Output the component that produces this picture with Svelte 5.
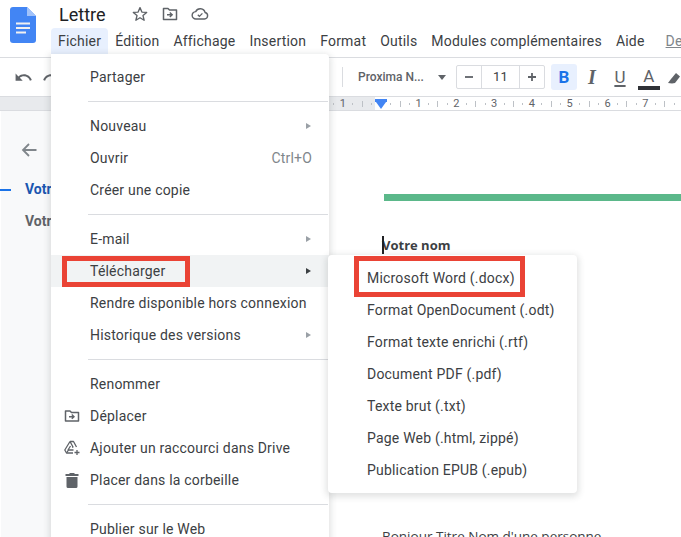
<script>
  const menus = ['Fichier', 'Édition', 'Affichage', 'Insertion', 'Format', 'Outils', 'Modules complémentaires', 'Aide']

  const fileMenu = [
    [{ label: 'Partager' }],
    [{ label: 'Nouveau', arrow: true }, { label: 'Ouvrir', shortcut: 'Ctrl+O' }, { label: 'Créer une copie' }],
    [
      { label: 'E-mail', arrow: true },
      { label: 'Télécharger', arrow: true, active: true },
      { label: 'Rendre disponible hors connexion' },
      { label: 'Historique des versions', arrow: true }
    ],
    [
      { label: 'Renommer' },
      { label: 'Déplacer', icon: 'move' },
      { label: 'Ajouter un raccourci dans Drive', icon: 'shortcut' },
      { label: 'Placer dans la corbeille', icon: 'trash' }
    ],
    [{ label: 'Publier sur le Web' }]
  ]

  const formats = [
    'Microsoft Word (.docx)',
    'Format OpenDocument (.odt)',
    'Format texte enrichi (.rtf)',
    'Document PDF (.pdf)',
    'Texte brut (.txt)',
    'Page Web (.html, zippé)',
    'Publication EPUB (.epub)'
  ]

  // the cell at 0 sits under the indent marker, so it stays blank
  const rulerMarks = ['1', '', '1', '2', '3', '4', '5', '6', '7', '']
  const undoPath = 'M12.500 8c-2.650 0-5.050.99-6.900 2.600L2 7v9h9l-3.620-3.620c1.390-1.160 3.160-1.880 5.120-1.880 3.540 0 6.550 2.310 7.600 5.500l2.370-.78C21.080 11.030 17.150 8 12.500 8z'
</script>

<div class="app">
  <header class="header">
    <svg class="logo" viewBox="0 0 26 36" width="26" height="36">
      <path d="M3 0h14l9 9v24a3 3 0 0 1-3 3H3a3 3 0 0 1-3-3V3a3 3 0 0 1 3-3z" fill="#4285f4" />
      <path d="M17 0l9 9h-9z" fill="#a1c2fa" />
      <path d="M6 15.500h14v2H6zM6 20h14v2H6zM6 24.500h10v2H6z" fill="#f1f1f1" />
    </svg>
    <div class="head-main">
      <div class="title-row">
        <span class="title">Lettre</span>
        <svg class="star" viewBox="0 0 24 24" width="18" height="18">
          <path d="M12 3.500l2.500 5.900 6.400.5-4.900 4.200 1.500 6.200L12 17l-5.500 3.300L8 14.100 3.100 9.900l6.400-.5z" fill="none" stroke="#5f6368" stroke-width="1.800" stroke-linejoin="round" />
        </svg>
        <svg class="folder" viewBox="0 0 18 18" width="18" height="18">
          <path d="M2.500 3.500h4.500l1.500 1.500h7v9.500h-13z" fill="none" stroke="#5f6368" stroke-width="1.500" stroke-linejoin="round" />
          <path d="M6 9.700h4.500M8.800 7.400l2.400 2.300-2.400 2.300" fill="none" stroke="#5f6368" stroke-width="1.400" />
        </svg>
        <svg class="cloud" viewBox="0 0 18 18" width="18" height="18">
          <path d="M5 14h8.500a3.300 3.300 0 0 0 .6-6.500A5 5 0 0 0 4.700 6.600 3.700 3.700 0 0 0 5 14z" fill="none" stroke="#5f6368" stroke-width="1.400" />
          <path d="M6.800 9.800l1.600 1.600 3-3" fill="none" stroke="#5f6368" stroke-width="1.300" />
        </svg>
      </div>
      <nav class="menubar">
        {#each menus as menu, i}
          <span class="menu-label" class:open={i === 0}>{menu}</span>
        {/each}
        <span class="last-edit">Dernière modification</span>
      </nav>
    </div>
  </header>

  <div class="toolbar">
    <svg class="undo" viewBox="0 0 24 24" width="19" height="19">
      <path d={undoPath} fill="#5f6368" />
    </svg>
    <svg class="redo" viewBox="0 0 24 24" width="19" height="19">
      <path d={undoPath} fill="#5f6368" transform="matrix(-1 0 0 1 24 0)" />
    </svg>
    <span class="tool-sep"></span>
    <span class="font-name">Proxima N...</span>
    <span class="caret"></span>
    <div class="size-box">
      <span class="size-btn">
        <svg viewBox="0 0 12 12" width="12" height="12"><path d="M2 6h8" stroke="#5f6368" stroke-width="1.800" /></svg>
      </span>
      <span class="size-value">11</span>
      <span class="size-btn">
        <svg viewBox="0 0 12 12" width="12" height="12"><path d="M2 6h8M6 2v8" stroke="#5f6368" stroke-width="1.800" /></svg>
      </span>
    </div>
    <span class="fmt bold-btn">B</span>
    <span class="fmt italic-btn">I</span>
    <span class="fmt underline-btn">U</span>
    <span class="fmt color-btn">A</span>
    <svg class="marker" viewBox="0 0 18 18" width="18" height="18">
      <path d="M2 15l3-4 5-6 4 3.500-5 6.500-3 .5z" fill="#5f6368" />
    </svg>
  </div>

  <div class="ruler">
    {#each rulerMarks as mark}
      <span class="ruler-num">{mark}</span>
    {/each}
    <span class="indent-marker"></span>
  </div>

  <main class="workspace">
    <aside class="outline">
      <svg class="back" viewBox="0 0 18 18" width="18" height="18">
        <path d="M16.500 9H3M9 3L3 9l6 6" fill="none" stroke="#80868b" stroke-width="1.800" />
      </svg>
      <div class="outline-item current"><span class="dash"></span>Votre nom</div>
      <div class="outline-item">Votre adresse</div>
    </aside>
    <section class="page">
      <div class="green-bar"></div>
      <div class="name-line"><span class="cursor"></span>Votre nom</div>
      <p class="greeting">Bonjour Titre Nom d'une personne</p>
    </section>
  </main>

  <div class="file-menu">
    {#each fileMenu as group, g}
      {#if g > 0}<div class="sep"></div>{/if}
      {#each group as item}
        <div class="row" class:active={item.active}>
          {#if item.icon === 'move'}
            <svg class="row-icon" viewBox="0 0 18 18" width="18" height="18">
              <path d="M2.500 4h4.500l1.500 1.500h7v8.500h-13z" fill="none" stroke="#5f6368" stroke-width="1.500" stroke-linejoin="round" />
              <path d="M6 9.700h4.500M8.800 7.600l2.200 2.100-2.200 2.100" fill="none" stroke="#5f6368" stroke-width="1.400" />
            </svg>
          {:else if item.icon === 'shortcut'}
            <svg class="row-icon" viewBox="0 0 18 18" width="18" height="18">
              <path d="M7 2.500h3.500l3 5.500M7 2.500L1.800 11 3.500 14H10M7 2.500l3 5.500H9M5 11l2.500-4" fill="none" stroke="#5f6368" stroke-width="1.300" stroke-linejoin="round" />
              <path d="M3.500 14l2-3h5" fill="none" stroke="#5f6368" stroke-width="1.300" />
              <path d="M14 11v5M11.500 13.500h5" stroke="#5f6368" stroke-width="1.300" />
            </svg>
          {:else if item.icon === 'trash'}
            <svg class="row-icon" viewBox="0 0 18 18" width="18" height="18">
              <path d="M7 2h4l1 1h3.500v2h-13V3H6zM3.500 6h11v9.500a1.500 1.500 0 0 1-1.500 1.500H5a1.500 1.500 0 0 1-1.500-1.500z" fill="#5f6368" />
            </svg>
          {/if}
          <span class="row-label">{item.label}</span>
          {#if item.shortcut}<span class="shortcut">{item.shortcut}</span>{/if}
          {#if item.arrow}<span class="arrow"></span>{/if}
        </div>
      {/each}
    {/each}
  </div>

  <div class="sub-menu">
    {#each formats as format}
      <div class="sub-row">{format}</div>
    {/each}
  </div>

  <div class="callout callout-left"></div>
  <div class="callout callout-right"></div>
</div>

<style>
  :global(body) {
    margin: 0;
    overflow: hidden;
  }

  .app {
    position: relative;
    display: flex;
    flex-direction: column;
    width: 681px;
    height: 537px;
    overflow: hidden;
    background: #fff;
    font-family: Roboto, sans-serif;
    font-size: 14px;
    letter-spacing: 0.2px;
    color: #3c4043;
  }

  .header {
    display: flex;
    flex: none;
    height: 58px;
    padding-left: 10px;
    box-sizing: border-box;
    border-bottom: 1px solid #dadce0;
  }

  .logo {
    margin-top: 7px;
    flex: none;
  }

  .head-main {
    margin-left: 15px;
    min-width: 0;
  }

  .title-row {
    display: flex;
    align-items: center;
    height: 28px;
    padding-left: 8px;
  }

  .title {
    font-size: 18px;
    letter-spacing: 0;
    color: #202124;
    width: 72px;
  }

  .star { margin-right: 12px; }
  .folder { margin-right: 12px; }

  .menubar {
    display: flex;
    align-items: center;
    height: 26px;
    white-space: nowrap;
  }

  .menu-label {
    padding: 0 7px;
    line-height: 26px;
    border-radius: 4px 4px 0 0;
  }

  .menu-label.open {
    background: #e8f0fe;
  }

  .last-edit {
    margin-left: 14px;
    color: #80868b;
    text-decoration: underline;
  }

  .toolbar {
    display: flex;
    align-items: center;
    flex: none;
    height: 39px;
    padding-left: 14px;
    box-sizing: border-box;
    border-bottom: 1px solid #dadce0;
  }

  .toolbar > * { flex: none; }

  .redo { margin-left: 9px; }

  .tool-sep {
    width: 1px;
    height: 20px;
    margin-left: 281px;
    background: #dadce0;
  }

  .font-name {
    margin-left: 15px;
    width: 77px;
    font-size: 12px;
    font-weight: 500;
    letter-spacing: 0;
    color: #5f6368;
    white-space: nowrap;
  }

  .caret {
    width: 0;
    height: 0;
    margin-left: 3px;
    border: 4px solid transparent;
    border-top: 5px solid #5f6368;
    border-bottom: 0;
  }

  .size-box {
    display: flex;
    width: 89px;
    height: 24px;
    margin-left: 10px;
    box-sizing: border-box;
    border: 1px solid #dadce0;
    border-radius: 2px;
  }

  .size-btn {
    display: flex;
    align-items: center;
    justify-content: center;
    width: 24px;
  }

  .size-value {
    width: 40px;
    line-height: 22px;
    box-sizing: border-box;
    text-align: center;
    font-size: 13px;
    border-left: 1px solid #dadce0;
    border-right: 1px solid #dadce0;
  }

  .fmt {
    display: flex;
    align-items: center;
    justify-content: center;
    width: 26px;
    height: 26px;
    margin-left: 2px;
    color: #5f6368;
    border-radius: 3px;
  }

  .bold-btn {
    margin-left: 6px;
    font-size: 17px;
    font-weight: 700;
    color: #1a73e8;
    background: #e8f0fe;
  }

  .italic-btn {
    font-family: "Liberation Serif", serif;
    font-size: 20px;
    font-weight: 700;
    font-style: italic;
  }

  .underline-btn {
    font-size: 17px;
    text-decoration: underline;
    text-decoration-thickness: 2px;
    text-underline-offset: 2px;
  }

  .color-btn {
    width: 22px;
    height: 25px;
    margin: 1px 0 0 5px;
    box-sizing: border-box;
    font-size: 17px;
    color: #5f6368;
    border-bottom: 4px solid #2f3136;
    border-radius: 0;
  }

  .marker { margin-left: 6px; }

  .ruler {
    position: relative;
    display: flex;
    flex: none;
    height: 14px;
    padding-left: 324px;
    box-sizing: border-box;
    border-bottom: 1px solid #dadce0;
    background: linear-gradient(90deg, #e8eaed 375px, #fff 375px);
    font-size: 11px;
    letter-spacing: 0;
    color: #5f6368;
  }

  .ruler-num {
    flex: none;
    width: 37.8px;
    height: 13px;
    text-align: center;
    line-height: 13px;
    background:
      linear-gradient(#bdc1c6, #bdc1c6) 0 50% / 1px 6px no-repeat,
      linear-gradient(#bdc1c6, #bdc1c6) 9.45px 50% / 1px 2px no-repeat,
      linear-gradient(#bdc1c6, #bdc1c6) 28.35px 50% / 1px 2px no-repeat;
  }

  .indent-marker {
    position: absolute;
    left: 375px;
    top: 2px;
    width: 12px;
    height: 3px;
    background: #4285f4;
  }

  .indent-marker::after {
    content: '';
    position: absolute;
    left: 1px;
    top: 3px;
    border: 5px solid transparent;
    border-top: 7px solid #4285f4;
    border-bottom: 0;
  }

  .workspace {
    display: flex;
    flex: 1;
    min-height: 0;
    background: #f8f9fa;
    border-left: 1px solid #fff;
  }

  .outline {
    width: 328px;
    flex: none;
    padding-top: 30px;
    box-sizing: border-box;
  }

  .back {
    display: block;
    margin: 0 0 20px 19px;
  }

  .outline-item {
    position: relative;
    height: 32px;
    line-height: 20px;
    padding-left: 24px;
    font-weight: 700;
    letter-spacing: 0;
    color: #5f6368;
    white-space: nowrap;
  }

  .outline-item.current { color: #1a56b0; }

  .dash {
    position: absolute;
    left: -1px;
    top: 10px;
    width: 11px;
    height: 2px;
    background: #1a73e8;
  }

  .page {
    flex: 1;
    padding: 83px 0 0 55px;
    background: #fff;
    box-shadow: 0 0 4px rgba(60, 64, 67, 0.25);
  }

  .green-bar {
    height: 7px;
    background: #5bb88a;
  }

  .name-line {
    position: relative;
    margin: 35px 0 0 -2px;
    font-family: "Open Sans", sans-serif;
    font-size: 13px;
    font-weight: 700;
    letter-spacing: 0;
    line-height: 18px;
    color: #3c4043;
  }

  .cursor {
    position: absolute;
    left: 0;
    top: 0;
    width: 2px;
    height: 18px;
    background: #202124;
  }

  .greeting {
    margin: 0;
    position: absolute;
    left: 382px;
    top: 527px;
    font-family: "Open Sans", sans-serif;
    font-size: 13.500px;
    letter-spacing: 0;
    line-height: 18px;
  }

  .file-menu {
    position: absolute;
    left: 51px;
    top: 54px;
    width: 278px;
    height: 500px;
    padding-top: 7px;
    box-sizing: border-box;
    background: #fff;
    border-radius: 0 4px 4px 4px;
    box-shadow: 0 2px 6px 2px rgba(60, 64, 67, 0.15);
  }

  .row {
    position: relative;
    display: flex;
    align-items: center;
    height: 32px;
    padding-left: 39px;
    white-space: nowrap;
    color: #3c4043;
  }

  .row.active {
    background: #f1f3f4;
  }

  .row-icon {
    position: absolute;
    left: 12px;
    top: 7px;
  }

  .shortcut {
    margin-left: auto;
    padding-right: 17px;
    color: #80868b;
  }

  .arrow {
    margin-left: auto;
    margin-right: 18px;
    border: 3.500px solid transparent;
    border-left: 5px solid #9aa0a6;
    border-right: 0;
  }

  .row.active .arrow { border-left-color: #3c4043; }

  .sep {
    height: 1px;
    margin: 8px 1px 8px 37px;
    background: #dadce0;
  }

  .sub-menu {
    position: absolute;
    left: 328px;
    top: 255px;
    width: 249px;
    height: 238px;
    padding-top: 7px;
    box-sizing: border-box;
    background: #fff;
    border-radius: 4px;
    box-shadow: 0 2px 6px 2px rgba(60, 64, 67, 0.15);
  }

  .sub-row {
    height: 32px;
    padding-left: 39px;
    line-height: 32px;
    white-space: nowrap;
  }

  .callout {
    position: absolute;
    box-sizing: border-box;
    border: 5px solid #ea4335;
  }

  .callout-left {
    left: 62px;
    top: 256px;
    width: 128px;
    height: 31px;
  }

  .callout-right {
    left: 354px;
    top: 256px;
    width: 171px;
    height: 41px;
  }
</style>
